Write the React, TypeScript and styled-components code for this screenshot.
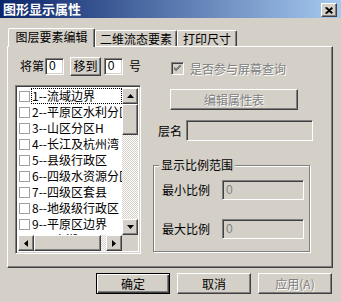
import React from "react";
import styled, { createGlobalStyle, css } from "styled-components";

const GlobalStyle = createGlobalStyle`
  html, body { margin: 0; padding: 0; background: #D4D0C8; }
  body {
    font-family: "Noto Sans CJK SC", "Liberation Sans", sans-serif;
    font-size: 12px;
    color: #000;
  }
  * { box-sizing: border-box; }
`;

const raised = css`
  border: 1px solid;
  border-color: #ffffff #404040 #404040 #ffffff;
  box-shadow: inset -1px -1px #808080;
  background: #d4d0c8;
`;

const sunken = css`
  border: 1px solid;
  border-color: #808080 #ffffff #ffffff #808080;
  box-shadow: inset 1px 1px #404040, inset -1px -1px #d4d0c8;
`;

const disabledText = css`
  color: #808080;
  text-shadow: 1px 1px 0 #ffffff;
`;

const Window = styled.div`
  width: 341px;
  height: 302px;
  background: #d4d0c8;
  display: flex;
  flex-direction: column;
  overflow: hidden;
`;

const TitleBar = styled.div`
  height: 18px;
  background: linear-gradient(to right, #0a246a, #a6caf0);
  display: flex;
  align-items: center;
  justify-content: space-between;
  padding: 0 4px 0 3px;
`;

const TitleText = styled.span`
  color: #fff;
  font-weight: bold;
  font-size: 13px;
  line-height: 18px;
`;

const CloseButton = styled.div`
  ${raised};
  width: 16px;
  height: 14px;
  display: flex;
  align-items: center;
  justify-content: center;
  margin-top: 2px;
`;

const TabStrip = styled.div`
  margin-top: 10px;
  height: 18px;
  padding-left: 8px;
  display: flex;
  align-items: flex-end;
`;

const Tab = styled.div<{ $active?: boolean; $w: number }>`
  width: ${(p) => p.$w}px;
  height: ${(p) => (p.$active ? 19 : 16)}px;
  margin-bottom: ${(p) => (p.$active ? -1 : 0)}px;
  position: relative;
  z-index: ${(p) => (p.$active ? 2 : 1)};
  background: #d4d0c8;
  border-top: 1px solid #fff;
  border-left: 1px solid #fff;
  border-right: 1px solid #404040;
  border-radius: 2px 2px 0 0;
  box-shadow: inset -1px 0 #808080;
  display: flex;
  align-items: center;
  justify-content: center;
  line-height: 14px;
  white-space: nowrap;
  padding-bottom: ${(p) => (p.$active ? 2 : 0)}px;
`;

const Panel = styled.div`
  margin-left: 7px;
  width: 326px;
  height: 222px;
  border: 1px solid;
  border-color: #ffffff #404040 #404040 #ffffff;
  box-shadow: inset -1px -1px #808080;
  padding: 10px 0 0 7px;
  display: flex;
  gap: 12px;
`;

const LeftCol = styled.div`
  width: 126px;
  display: flex;
  flex-direction: column;
`;

const MoveRow = styled.div`
  height: 18px;
  display: flex;
  align-items: center;
`;

const Label = styled.span<{ $ml?: number; $w?: number }>`
  margin-left: ${(p) => p.$ml ?? 0}px;
  ${(p) => (p.$w ? `width: ${p.$w}px;` : "")}
  white-space: nowrap;
  line-height: 16px;
`;

const Field = styled.div<{ $w: number; $h: number; $ml?: number; $disabled?: boolean }>`
  ${sunken};
  width: ${(p) => p.$w}px;
  height: ${(p) => p.$h}px;
  margin-left: ${(p) => p.$ml ?? 0}px;
  background: ${(p) => (p.$disabled ? "#d4d0c8" : "#ffffff")};
  color: ${(p) => (p.$disabled ? "#808080" : "#000")};
  font-family: "Liberation Sans", sans-serif;
  font-size: 12px;
  line-height: 14px;
  padding-left: 3px;
  display: flex;
  align-items: center;
`;

const Button = styled.div<{ $w: number; $h: number; $ml?: number; $mt?: number; $default?: boolean; $disabled?: boolean }>`
  width: ${(p) => p.$w}px;
  height: ${(p) => p.$h}px;
  margin-left: ${(p) => p.$ml ?? 0}px;
  margin-top: ${(p) => p.$mt ?? 0}px;
  background: #d4d0c8;
  display: flex;
  align-items: center;
  justify-content: center;
  white-space: nowrap;
  line-height: 14px;
  ${(p) =>
    p.$default
      ? css`
          border: 1px solid #000;
          box-shadow: inset 1px 1px #fff, inset -1px -1px #404040, inset -2px -2px #808080;
        `
      : raised}
  ${(p) => (p.$disabled ? disabledText : "")}
`;

const ListBox = styled.div`
  ${sunken};
  margin-top: 10px;
  width: 126px;
  height: 169px;
  background: #fff;
  padding: 2px;
  display: grid;
  grid-template-columns: 1fr 16px;
  grid-template-rows: 1fr 16px;
`;

const Items = styled.div`
  overflow: hidden;
  display: flex;
  flex-direction: column;
`;

const Item = styled.div`
  height: 16px;
  flex: 0 0 16px;
  display: flex;
  align-items: center;
  white-space: nowrap;
`;

const ItemBox = styled.span`
  width: 11px;
  height: 11px;
  flex: 0 0 11px;
  border: 1px solid #a0a0a0;
  margin-left: 1px;
  background: #fff;
`;

const ItemText = styled.span<{ $focus?: boolean }>`
  margin-left: 1px;
  padding-left: 1px;
  flex: 1;
  height: 16px;
  line-height: 15px;
  overflow: hidden;
  outline: ${(p) => (p.$focus ? "1px dotted #000" : "none")};
  outline-offset: -1px;
`;

const checker = css`
  background: repeating-conic-gradient(#d4d0c8 0% 25%, #ffffff 0% 50%) 0 0 / 2px 2px;
`;

const VScroll = styled.div`
  display: flex;
  flex-direction: column;
`;

const HScroll = styled.div`
  display: flex;
`;

const Track = styled.div`
  flex: 1;
  ${checker};
`;

const Thumb = styled.div<{ $w: number; $h: number }>`
  ${raised};
  width: ${(p) => p.$w}px;
  height: ${(p) => p.$h}px;
  flex: 0 0 auto;
`;

const ArrowBtn = styled.div`
  ${raised};
  width: 16px;
  height: 16px;
  flex: 0 0 16px;
  display: flex;
  align-items: center;
  justify-content: center;
`;

const Corner = styled.div`
  background: #d4d0c8;
`;

const RightCol = styled.div`
  width: 160px;
  display: flex;
  flex-direction: column;
`;

const CheckRow = styled.div`
  margin-top: 5px;
  margin-left: 18px;
  height: 13px;
  display: flex;
  align-items: center;
`;

const CheckBox = styled.div`
  ${sunken};
  width: 13px;
  height: 13px;
  background: #d4d0c8;
  display: flex;
  align-items: center;
  justify-content: center;
`;

const DisabledLabel = styled.span`
  ${disabledText};
  margin-left: 6px;
  white-space: nowrap;
`;

const NameRow = styled.div`
  margin-top: 10px;
  height: 21px;
  display: flex;
  align-items: center;
`;

const GroupBox = styled.div`
  margin-top: 24px;
  width: 157px;
  height: 87px;
  border: 1px solid #808080;
  box-shadow: inset 1px 1px #fff, 1px 1px #fff;
  display: flex;
  flex-direction: column;
`;

const Legend = styled.div`
  margin: -9px 0 0 5px;
  padding: 0 2px;
  width: fit-content;
  background: #d4d0c8;
  line-height: 16px;
  white-space: nowrap;
`;

const ScaleRow = styled.div<{ $mt: number }>`
  margin-top: ${(p) => p.$mt}px;
  padding-left: 8px;
  display: flex;
  align-items: center;
`;

const ButtonRow = styled.div`
  margin-top: 5px;
  display: flex;
  justify-content: flex-end;
  gap: 7px;
  padding-right: 9px;
`;

const Up = () => (
  <svg width="7" height="4" viewBox="0 0 7 4"><polygon points="3.5,0 7,4 0,4" fill="#000" /></svg>
);
const Down = () => (
  <svg width="7" height="4" viewBox="0 0 7 4"><polygon points="0,0 7,0 3.5,4" fill="#000" /></svg>
);
const Left = () => (
  <svg width="4" height="7" viewBox="0 0 4 7"><polygon points="4,0 4,7 0,3.5" fill="#000" /></svg>
);
const Right = () => (
  <svg width="4" height="7" viewBox="0 0 4 7"><polygon points="0,0 4,3.5 0,7" fill="#000" /></svg>
);

const items = [
  "1--流域边界",
  "2--平原区水利分区",
  "3--山区分区H",
  "4--长江及杭州湾",
  "5--县级行政区",
  "6--四级水资源分区",
  "7--四级区套县",
  "8--地级级行政区",
  "9--平原区边界",
  "10--太湖",
];

export default function App() {
  return (
    <>
      <GlobalStyle />
      <Window>
        <TitleBar>
          <TitleText>图形显示属性</TitleText>
          <CloseButton>
            <svg width="8" height="7" viewBox="0 0 8 7">
              <path d="M0.5 0.5 L7 6.5 M1.5 0.5 L7.5 6 M7 0.5 L0.5 6.5 M7.5 1 L1.5 6.5" stroke="#000" strokeWidth="1.2" />
            </svg>
          </CloseButton>
        </TitleBar>
        <TabStrip>
          <Tab $active $w={87}>图层要素编辑</Tab>
          <Tab $w={82}>二维流态要素</Tab>
          <Tab $w={60}>打印尺寸</Tab>
        </TabStrip>
        <Panel>
          <LeftCol>
            <MoveRow>
              <Label $ml={5}>将第</Label>
              <Field $w={21} $h={17} $ml={1}>0</Field>
              <Button $w={34} $h={19} $ml={6}>移到</Button>
              <Field $w={21} $h={17} $ml={3}>0</Field>
              <Label $ml={6}>号</Label>
            </MoveRow>
            <ListBox>
              <Items>
                {items.map((t, i) => (
                  <Item key={t}>
                    <ItemBox />
                    <ItemText $focus={i === 0}>{t}</ItemText>
                  </Item>
                ))}
              </Items>
              <VScroll>
                <ArrowBtn><Up /></ArrowBtn>
                <Thumb $w={16} $h={31} />
                <Track />
                <ArrowBtn><Down /></ArrowBtn>
              </VScroll>
              <HScroll>
                <ArrowBtn><Left /></ArrowBtn>
                <Thumb $w={67} $h={16} />
                <Track />
                <ArrowBtn><Right /></ArrowBtn>
              </HScroll>
              <Corner />
            </ListBox>
          </LeftCol>
          <RightCol>
            <CheckRow>
              <CheckBox>
                <svg width="7" height="7" viewBox="0 0 7 7">
                  <path d="M0 2 L2 4 L7 -1 M0 3 L2 5 L7 0 M0 4 L2 6 L7 1" stroke="#808080" strokeWidth="1" fill="none" />
                </svg>
              </CheckBox>
              <DisabledLabel>是否参与屏幕查询</DisabledLabel>
            </CheckRow>
            <Button $w={128} $h={21} $ml={17} $mt={14} $disabled>编辑属性表</Button>
            <NameRow>
              <Label $ml={5} $w={28}>层名</Label>
              <Field $w={128} $h={21} $disabled />
            </NameRow>
            <GroupBox>
              <Legend>显示比例范围</Legend>
              <ScaleRow $mt={7}>
                <Label $w={60}>最小比例</Label>
                <Field $w={82} $h={20} $disabled>0</Field>
              </ScaleRow>
              <ScaleRow $mt={19}>
                <Label $w={60}>最大比例</Label>
                <Field $w={82} $h={20} $disabled>0</Field>
              </ScaleRow>
            </GroupBox>
          </RightCol>
        </Panel>
        <ButtonRow>
          <Button $w={74} $h={21} $default>确定</Button>
          <Button $w={74} $h={21}>取消</Button>
          <Button $w={74} $h={21} $disabled>应用(A)</Button>
        </ButtonRow>
      </Window>
    </>
  );
}
